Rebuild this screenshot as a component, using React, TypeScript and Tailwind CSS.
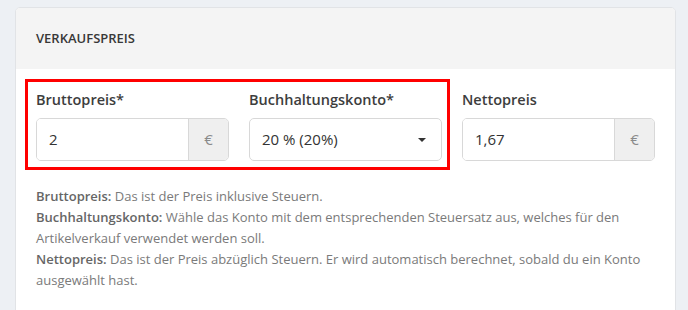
import React from 'react'

/*
Verkaufspreis card with price inputs
*/

const font = { fontFamily: '"Open Sans", "Noto Sans", sans-serif' }

type PriceInputProps = {
    label: string;
    value: string;
};

const PriceInput = ({ label, value }: PriceInputProps) => {
    return (
        <div className="flex flex-col">
            <label className="text-[14.5px] leading-[22px] font-semibold text-[#3d3d3d] mb-[7px]">{label}</label>
            <div className="flex h-[43px] rounded-[5px] border border-[#d8d8d8] overflow-hidden">
                <div className="flex-1 flex items-center px-3 bg-white text-[15px] text-[#333]">{value}</div>
                <div className="w-[40px] flex items-center justify-center bg-[#efefef] border-l border-[#d8d8d8] text-[15px] text-[#8a8a8a]">€</div>
            </div>
        </div>
    );
};

const App = () => {
    return (
        <div style={font} className="w-[688px] h-[310px] overflow-hidden bg-[#edf0f4] pl-[15px] pt-[7px]">
            <div className="w-[661px] h-[320px] bg-white border border-[#e1e3e6] rounded-[5px] overflow-hidden">
                {/* Header */}
                <div className="h-[61px] bg-[#f4f4f4] flex items-center px-5">
                    <h3 className="text-[13px] font-semibold text-[#383838]">VERKAUFSPREIS</h3>
                </div>

                {/* Body */}
                <div className="relative px-5 pt-5">
                    <div className="grid grid-cols-3 gap-5">
                        <PriceInput label="Bruttopreis*" value="2" />

                        {/* Select */}
                        <div className="flex flex-col">
                            <label className="text-[14.5px] leading-[22px] font-semibold text-[#3d3d3d] mb-[7px]">Buchhaltungskonto*</label>
                            <div className="flex h-[43px] items-center justify-between rounded-[5px] border border-[#d8d8d8] bg-white pl-3 pr-[15px]">
                                <span className="text-[15px] text-[#333]">20 % (20%)</span>
                                <svg width="8" height="4" viewBox="0 0 8 4">
                                    <path d="M0 0 L8 0 L4 4 Z" fill="#333" />
                                </svg>
                            </div>
                        </div>

                        <PriceInput label="Nettopreis" value="1,67" />
                    </div>

                    {/* Highlight */}
                    <div className="absolute left-[9px] top-[10px] w-[425px] h-[91px] border-[3px] border-[#ff0000] pointer-events-none"></div>

                    {/* Help text */}
                    <div className="mt-[25px] text-[13px] leading-[21px] text-[#7a7a7a]">
                        <p><span className="font-semibold text-[#666]">Bruttopreis:</span> Das ist der Preis inklusive Steuern.</p>
                        <p><span className="font-semibold text-[#666]">Buchhaltungskonto:</span> Wähle das Konto mit dem entsprechenden Steuersatz aus, welches für den Artikelverkauf verwendet werden soll.</p>
                        <p><span className="font-semibold text-[#666]">Nettopreis:</span> Das ist der Preis abzüglich Steuern. Er wird automatisch berechnet, sobald du ein Konto ausgewählt hast.</p>
                    </div>
                </div>
            </div>
        </div>
    );
};

export default App;
